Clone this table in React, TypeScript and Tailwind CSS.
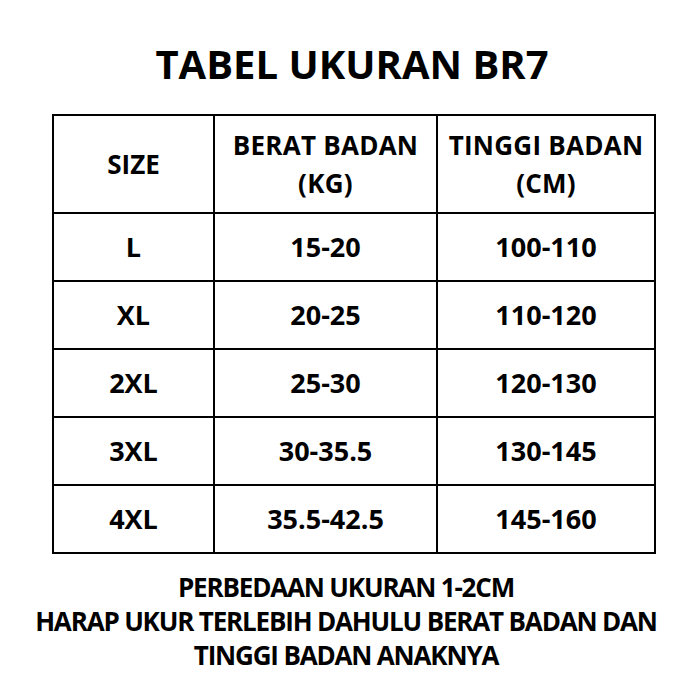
import React from "react";

const rows = [
  { size: "L", berat: "15-20", tinggi: "100-110" },
  { size: "XL", berat: "20-25", tinggi: "110-120" },
  { size: "2XL", berat: "25-30", tinggi: "120-130" },
  { size: "3XL", berat: "30-35.5", tinggi: "130-145" },
  { size: "4XL", berat: "35.5-42.5", tinggi: "145-160" },
];

export default function App() {
  return (
    <div
      className="w-[700px] h-[700px] bg-white text-black flex flex-col"
      style={{ fontFamily: '"Open Sans", "Noto Sans", sans-serif' }}
    >
      {/* Title */}
      <h1 className="mt-[36px] text-center text-[40px] leading-[56px] font-bold pl-[4px]">
        TABEL UKURAN BR7
      </h1>

      {/* Table */}
      <div className="mt-[22px] ml-[52px] w-[604px] border-2 border-black">
        <div className="grid grid-cols-[161px_223px_1fr] h-[96px] text-[26px] font-bold leading-[38px]">
          <div className="flex items-center justify-center border-r-2 border-black">SIZE</div>
          <div className="flex flex-col items-center justify-center border-r-2 border-black text-center tracking-[0.01em]">
            <span>BERAT BADAN</span>
            <span>(KG)</span>
          </div>
          <div className="flex flex-col items-center justify-center text-center tracking-[0.01em]">
            <span>TINGGI BADAN</span>
            <span>(CM)</span>
          </div>
        </div>
        {rows.map((r) => (
          <div
            key={r.size}
            className="grid grid-cols-[161px_223px_1fr] h-[68px] border-t-2 border-black text-[27px] font-bold"
          >
            <div className="flex items-center justify-center border-r-2 border-black">{r.size}</div>
            <div className="flex items-center justify-center border-r-2 border-black">{r.berat}</div>
            <div className="flex items-center justify-center">{r.tinggi}</div>
          </div>
        ))}
      </div>

      {/* Notes */}
      <div className="mt-[16px] pr-[8px] text-center text-[26px] font-bold leading-[34px] tracking-[-0.045em]">
        <p>PERBEDAAN UKURAN 1-2CM</p>
        <p>HARAP UKUR TERLEBIH DAHULU BERAT BADAN DAN</p>
        <p>TINGGI BADAN ANAKNYA</p>
      </div>
    </div>
  );
}
